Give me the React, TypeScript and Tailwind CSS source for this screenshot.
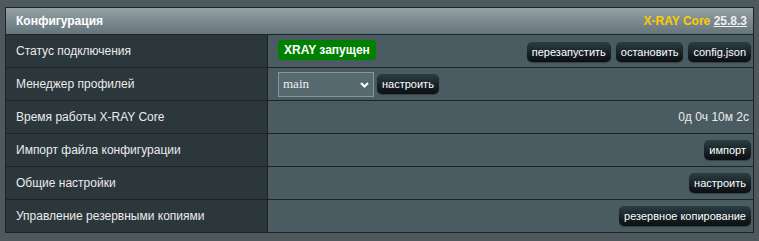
import React from "react";

const btn =
  "h-[20px] px-[5px] rounded-[5px] bg-gradient-to-b from-[#2c3d44] to-[#0a0f12] text-white text-[11px] leading-[20px] whitespace-nowrap shadow-[0_1px_1px_rgba(0,0,0,0.3)]";

function Row({
  label,
  last,
  children,
  right,
}: {
  label: string;
  last?: boolean;
  children?: React.ReactNode;
  right?: boolean;
}) {
  return (
    <div
      className={`flex ${last ? "h-[32px]" : "h-[33px] border-b border-[#222]"}`}
    >
      <div className="w-[262px] shrink-0 border-r border-[#222] bg-[#2c373c] pl-[10px] flex items-center text-[#ebebeb]">
        {label}
      </div>
      <div
        className={`flex-1 bg-[#4a5b61] flex items-center ${
          right ? "justify-end pr-[2px]" : "pl-[10px]"
        }`}
      >
        {children}
      </div>
    </div>
  );
}

export default function App() {
  return (
    <div
      className="w-[759px] h-[241px] bg-[#4d595d] pt-[7px] px-[5px] text-[12px]"
      style={{ fontFamily: '"Liberation Sans", Arial, sans-serif' }}
    >
      <div className="w-[749px] border border-[#222]">
        <div className="h-[27px] border-b border-[#222] bg-gradient-to-b from-[#93a1a6] to-[#66757b] flex items-center justify-between pl-[10px] pr-[6px] font-bold text-white text-[12px]">
          <span>Конфигурация</span>
          <span>
            <span className="text-[#ffcc00]">X-RAY Core</span>{" "}
            <span className="underline text-[#f0f0f0]">25.8.3</span>
          </span>
        </div>
        <Row label="Статус подключения">
          <div className="flex items-center w-full justify-between pr-[2px]">
            <span className="h-[20px] px-[6px] rounded-[4px] bg-[#008000] text-white font-bold leading-[20px] -mt-[3px]">
              XRAY запущен
            </span>
            <div className="flex gap-[5px] mt-[1px]">
              <button className={btn}>перезапустить</button>
              <button className={btn}>остановить</button>
              <button className={btn}>config.json</button>
            </div>
          </div>
        </Row>
        <Row label="Менеджер профилей">
          <div className="flex items-center gap-[3px]">
            <div className="relative w-[96px] h-[25px]">
              <select
                className="appearance-none w-full h-full bg-[#576a70] border border-[#8a9599] text-[#f0f0f0] text-[13px] pl-[4px] outline-none"
                style={{ fontFamily: '"Liberation Serif", "Times New Roman", serif' }}
                defaultValue="main"
              >
                <option value="main">main</option>
              </select>
              <svg
                className="absolute right-[5px] top-[10px] pointer-events-none"
                width="9"
                height="6"
                viewBox="0 0 9 6"
              >
                <path
                  d="M1 1 L4.5 4.5 L8 1"
                  stroke="white"
                  strokeWidth="2"
                  fill="none"
                />
              </svg>
            </div>
            <button className={btn}>настроить</button>
          </div>
        </Row>
        <Row label="Время работы X-RAY Core" right>
          <span className="text-[#ebebeb] pr-[2px]">0д 0ч 10м 2с</span>
        </Row>
        <Row label="Импорт файла конфигурации" right>
          <button className={btn}>импорт</button>
        </Row>
        <Row label="Общие настройки" right>
          <button className={btn}>настроить</button>
        </Row>
        <Row label="Управление резервными копиями" right last>
          <button className={btn}>резервное копирование</button>
        </Row>
      </div>
    </div>
  );
}
